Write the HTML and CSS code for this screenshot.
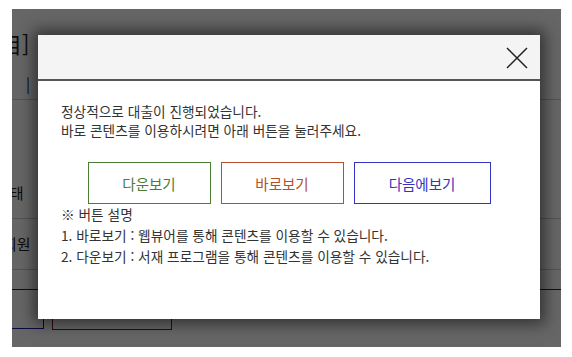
FILE: index.html
```html
<!DOCTYPE html>
<html lang="ko">
<head>
    <meta charset="UTF-8">
    <meta name="viewport" content="width=device-width, initial-scale=1.0">
    <title>대출</title>
    <link rel="stylesheet" href="styles.css">
</head>
<body>

    <div class="page">
        <div class="behind">
            <div class="title">目]</div>
            <div class="dots">· · · · · · · · · ·</div>
            <div class="row first"><span>|</span></div>
            <div class="row"><span class="s1">상태</span></div>
            <div class="row"><span class="s2">회원</span></div>
            <div class="row blue"></div>
            <div class="bottom-btns">
                <span class="b1"></span>
                <span class="b2"></span>
            </div>
        </div>
        <div class="dim"></div>

        <div class="modal">
            <div class="modal-head">
                <svg class="close" width="22" height="22" viewBox="0 0 22 22">
                    <path d="M1 1 L21 21 M21 1 L1 21" stroke="#222" stroke-width="1.5" fill="none"/>
                </svg>
            </div>
            <div class="modal-body">
                <p>정상적으로 대출이 진행되었습니다.<br>바로 콘텐츠를 이용하시려면 아래 버튼을 눌러주세요.</p>

                <div class="btns">
                    <button class="btn green">다운보기</button>
                    <button class="btn red">바로보기</button>
                    <button class="btn blue wide">다음에보기</button>
                </div>

                <p class="desc">※ 버튼 설명<br>1. 바로보기 : 웹뷰어를 통해 콘텐츠를 이용할 수 있습니다.<br>2. 다운보기 : 서재 프로그램을 통해 콘텐츠를 이용할 수 있습니다.</p>
            </div>
        </div>
    </div>

</body>
</html>
```

FILE: styles.css
```css
body{
    margin: 0;
    background: #fff;
    font-family: "Noto Sans CJK KR", "Noto Sans", sans-serif;
}
.page{
    position: relative;
    margin: 9px 0 0 12px;
    width: 549px;
    height: 338px;
    overflow: hidden;
    background: #fff;
}
.behind{
    color: #222;
}
.title{
    font-size: 22px;
    line-height: 28px;
    padding-top: 20px;
    margin-left: -12px;
}
.dots{
    position: absolute;
    top: 18px;
    left: 40px;
    font-size: 12px;
    color: #999;
    letter-spacing: 4px;
}
.row{
    height: 50px;
    border-bottom: 1px solid #ccc;
    font-size: 15px;
    line-height: 50px;
}
.row .s1{
    margin-left: -16px;
}
.row .s2{
    margin-left: -9px;
}
.row.first{
    height: 30px;
    line-height: 30px;
    margin-top: 12px;
    margin-bottom: 68px;
    padding-left: 14px;
    border-bottom: 1px solid #ccc;
}
.row.blue{
    height: 19px;
    border-bottom: 1px solid #1a1aa0;
}
.bottom-btns{
    display: flex;
    gap: 8px;
    margin-top: 12px;
}
.bottom-btns span{
    height: 26px;
    border: 1px solid #1a1aa0;
    border-top: none;
}
.bottom-btns .b1{
    width: 40px;
    margin-left: -10px;
}
.bottom-btns .b2{
    width: 118px;
    border-color: #7a1a2a;
    border-top: 1px solid #7a1a2a;
}
.dim{
    position: absolute;
    inset: 0;
    background: rgba(0,0,0,0.6);
}
.modal{
    position: absolute;
    top: 26px;
    left: 26px;
    width: 502px;
    height: 284px;
    background: #fff;
    box-shadow: 0 0 14px 5px rgba(0,0,0,0.5);
}
.modal-head{
    height: 44px;
    background: #f4f4f4;
    border-bottom: 2px solid #555;
    display: flex;
    justify-content: flex-end;
    align-items: center;
}
.close{
    margin-right: 12px;
    margin-top: 2px;
}
.modal-body{
    padding: 21px 23px 0;
    color: #333;
    font-size: 13.7px;
}
.modal-body p{
    margin: 0;
    line-height: 19px;
}
.btns{
    display: flex;
    justify-content: center;
    gap: 10px;
    margin-top: 22px;
}
.btn{
    width: 123px;
    height: 42px;
    background: #fff;
    font-family: inherit;
    font-size: 14.5px;
    border: 1px solid;
    cursor: pointer;
}
.btn.wide{
    width: 137px;
}
.green{
    color: #4b7d33;
    border-color: #4b7d33;
}
.red{
    color: #b4502b;
    border-color: #b4502b;
}
.blue{
    color: #3434c4;
    border-color: #3434c4;
}
.modal-body .desc{
    line-height: 21px;
}
```
